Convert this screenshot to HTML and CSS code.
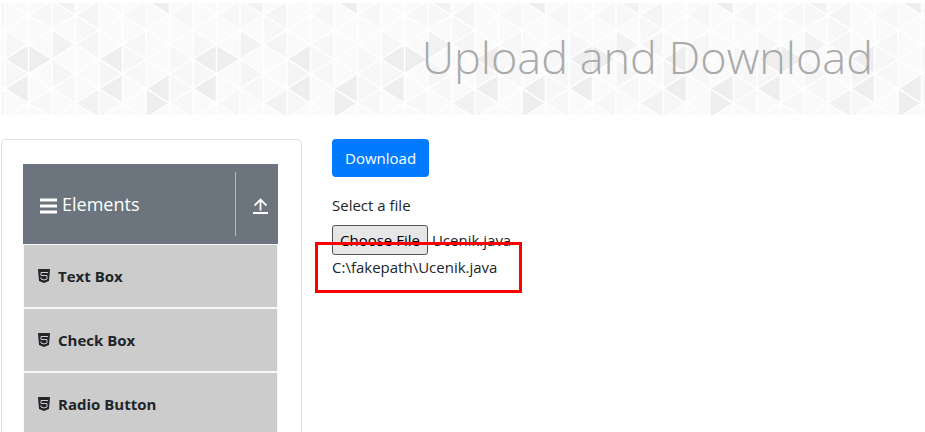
FILE: index.html
```html
<!DOCTYPE html>
<html lang="en">
<head>
<meta charset="utf-8">
<title>Upload and Download</title>
<link rel="stylesheet" href="styles.css">
</head>
<body>
<header class="banner">
  <svg class="banner-art" aria-hidden="true">
    <defs>
      <pattern id="tris" x="4" y="0" width="188" height="118" patternUnits="userSpaceOnUse">
        <rect width="188" height="118" fill="#fafafa"/>
        <g transform="translate(0 -2.6) scale(23.5 14.7)">
          <path fill="#f7f7f7" d="M1 1l1-1v2zM3 1L2 0v2zM4 2L3 1v2zM1 3L0 2v2zM1 5L0 4v2zM2 6l1-1v2zM1 7l1-1v2zM6 4L5 3v2zM5 5l1-1v2zM5 3l1-1v2zM7 5l1-1v2zM8 6L7 5v2zM7 7l1-1v2zM5 1l1-1v2zM7 1l1-1v2zM8 4L7 3v2zM5 7L4 6v2z"/>
          <path fill="#f5f5f5" d="M3 1l1-1v2zM3 5L2 4v2zM3 3l1-1v2zM5 5L4 4v2z"/>
          <path fill="#f2f2f2" d="M3 3L2 2v2zM3 7l1-1v2zM2 0l1-1v2z"/>
          <path fill="#eee" d="M0 4l1-1v2zM2 4L1 3v2zM0 6l1-1v2zM4 4l1-1v2zM4 6l1-1v2zM6 6l1-1v2zM7 7L6 6v2zM6 0l1-1v2z"/>
          <path class="banner-lines" d="M0 0v9M1 0v9M2 0v9M3 0v9M4 0v9M5 0v9M6 0v9M7 0v9M8 0v9M0-6l8 8M0-4l8 8M0-2l8 8M0 0l8 8M0 2l8 8M0 4l8 8M0 6l8 8M0 8l8 8M0 2l8-8M0 4l8-8M0 6l8-8M0 8l8-8M0 10l8-8M0 12l8-8M0 14l8-8M0 16l8-8"/>
        </g>
      </pattern>
    </defs>
    <rect width="100%" height="100%" fill="url(#tris)"/>
  </svg>
  <h1 class="banner-title">Upload and Download</h1>
</header>
<svg class="sprite" aria-hidden="true">
  <symbol id="html5" viewBox="0 0 12 14">
    <path fill="#212529" d="M0 0h12l-1 12L6 14l-5-2z"/>
    <path fill="none" stroke="#ccc" stroke-width="1" d="M10 3.500H3v3h6v3.500L6 11l-3-1V8.500"/>
  </symbol>
</svg>
<div class="layout">
  <nav class="panel">
    <button class="group" type="button">
      <svg class="menu-icon" viewBox="0 0 17 16" aria-hidden="true"><path d="M0 2h17M0 8h17M0 14h17" stroke="#fff" stroke-width="2.8"/></svg>
      <span class="group-name">Elements</span>
      <span class="group-toggle">
        <svg class="up-icon" viewBox="0 0 15 16" aria-hidden="true"><path d="M7.500 12.500V1.500M1.500 7.500l6-6 6 6M0 15h15" fill="none" stroke="#fff" stroke-width="1.800"/></svg>
      </span>
    </button>
    <ul class="items">
      <li><a class="item" href="#text-box"><svg class="item-icon"><use href="#html5"/></svg>Text Box</a></li>
      <li><a class="item" href="#check-box"><svg class="item-icon"><use href="#html5"/></svg>Check Box</a></li>
      <li><a class="item" href="#radio-button"><svg class="item-icon"><use href="#html5"/></svg>Radio Button</a></li>
    </ul>
  </nav>
  <main class="content">
    <a class="download" href="#download">Download</a>
    <form class="upload">
      <label class="upload-label" for="file">Select a file</label>
      <input class="upload-file" id="file" type="file">
      <div class="result">
        <p class="path">C:\fakepath\Ucenik.java</p>
        <span class="highlight"></span>
      </div>
    </form>
  </main>
</div>
<script src="script.js"></script>
</body>
</html>
```
FILE: styles.css
```css
* { box-sizing: border-box; }
html { overflow: hidden; }
body {
  display: flex;
  flex-direction: column;
  margin: 0;
  padding: 3px 0 0 1px;
  height: 100vh;
  overflow: hidden;
  background: #fff;
  color: #212529;
  font: 15px/24px "Open Sans", "Noto Sans", sans-serif;
}
.banner {
  position: relative;
  padding: 18px 52px 22px 20px;
  text-align: right;
}
.banner-art {
  position: absolute;
  inset: 0;
  width: 100%;
  height: 100%;
}
.banner-lines {
  fill: none;
  stroke: #fff;
  stroke-width: 1.5;
  vector-effect: non-scaling-stroke;
}
.banner-title {
  position: relative;
  margin: 0;
  color: #aaa;
  font-size: 45px;
  font-weight: 300;
  line-height: 72px;
}
.sprite { position: absolute; width: 0; height: 0; }
.layout {
  display: grid;
  flex: 1;
  grid-template-columns: 301px 1fr;
  grid-template-rows: 100%;
  gap: 30px;
  min-height: 0;
  margin-top: 24px;
}
.panel {
  padding: 24px 23px 0 21px;
  overflow: hidden;
  border: 1px solid #dfdfdf;
  border-bottom: 0;
  border-radius: 5px 5px 0 0;
}
.group {
  display: flex;
  align-items: center;
  width: 100%;
  height: 80px;
  padding: 0 0 0 17px;
  border: 0;
  background: #6c757d;
  color: #fff;
  font: inherit;
  font-size: 18px;
}
.menu-icon { width: 17px; height: 16px; margin: 3px 5px 0 0; }
.group-name { flex: 1; text-align: left; }
.group-toggle {
  display: flex;
  align-items: center;
  justify-content: flex-end;
  width: 43px;
  height: 64px;
  padding: 4px 10px 0 0;
  border-left: 1px solid #b5babe;
}
.up-icon { width: 15px; height: 16px; }
.items { margin: 0; padding: 0; list-style: none; }
.items li {
  padding: 1px;
  background: #f8f8f8;
}
.item {
  display: flex;
  align-items: center;
  gap: 8px;
  height: 62px;
  padding-left: 14px;
  background: #ccc;
  color: #212529;
  font-weight: 700;
  text-decoration: none;
}
.item-icon { width: 12px; height: 14px; }
.download {
  display: inline-block;
  padding: 7px 13px;
  border-radius: 4px;
  background: #007bff;
  color: #fff;
  text-decoration: none;
}
.upload { margin-top: 16px; }
.upload-label { display: block; margin-bottom: 8px; }
.upload-file {
  display: block;
  width: 100%;
  color: #212529;
  font: inherit;
  line-height: 24px;
}
.upload-file::file-selector-button {
  height: 30px;
  margin-right: 4px;
  padding: 0 7px;
  border: 1px solid #555;
  border-radius: 3px;
  background: #e6e6e6;
  color: #000;
  font: inherit;
}
.result { position: relative; }
.path { margin: 0; }
.highlight {
  position: absolute;
  top: -13px;
  left: -17px;
  width: 207px;
  height: 51px;
  border: 3px solid #f00;
}
```
FILE: script.js
```js
const picked = new DataTransfer();
picked.items.add(new File([""], "Ucenik.java"));
document.getElementById("file").files = picked.files;
```
